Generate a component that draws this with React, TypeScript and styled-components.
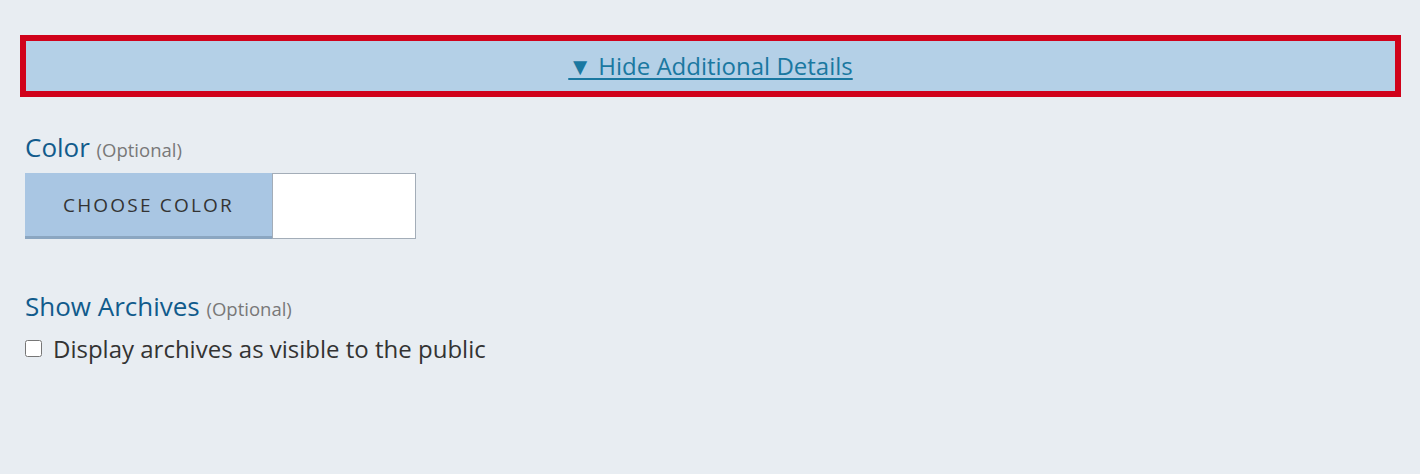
import React from "react";
import styled, { createGlobalStyle } from "styled-components";

const GlobalStyle = createGlobalStyle`
  html, body {
    margin: 0;
    padding: 0;
    background: #e8edf2;
  }
  body {
    font-family: "Open Sans", "Noto Sans", sans-serif;
    color: #333333;
  }
`;

const Page = styled.div`
  width: 1420px;
  height: 474px;
  box-sizing: border-box;
  padding: 35px 19px 0 20px;
  background: #e8edf2;
`;

const Toggle = styled.div`
  height: 62px;
  box-sizing: border-box;
  border: 6px solid #d0021b;
  background: #b4d0e7;
  display: flex;
  align-items: center;
  justify-content: center;
  padding-bottom: 2px;
`;

const ToggleLink = styled.a`
  font-size: 24px;
  color: #1a78a1;
  text-decoration: underline;
  text-underline-offset: 3px;
  text-decoration-thickness: 2px;
  cursor: pointer;
`;

const Field = styled.div<{ $top: number }>`
  padding-left: 5px;
  margin-top: ${({ $top }) => $top}px;
`;

const Label = styled.div`
  font-size: 26px;
  line-height: 30px;
  color: #115b8c;
  margin-bottom: 8px;
`;

const Optional = styled.span`
  font-size: 18.5px;
  color: #787878;
`;

const ColorPicker = styled.div`
  display: flex;
  width: 391px;
`;

const ChooseButton = styled.button`
  width: 247px;
  height: 66px;
  box-sizing: border-box;
  border: none;
  border-bottom: 3px solid #8ba6c1;
  background: #a9c6e3;
  font-family: "Open Sans", "Noto Sans", sans-serif;
  font-size: 19px;
  letter-spacing: 2.2px;
  color: #333333;
  padding: 0;
`;

const Swatch = styled.div`
  flex: 1;
  height: 66px;
  box-sizing: border-box;
  background: #ffffff;
  border: 1px solid #a3adb8;
`;

const CheckRow = styled.label`
  display: flex;
  align-items: center;
  gap: 11px;
  font-size: 24px;
  color: #333333;
  margin-top: 6px;
`;

const Box = styled.input`
  width: 17px;
  height: 17px;
  margin: 0;
`;

export default function App() {
  return (
    <>
      <GlobalStyle />
      <Page>
        <Toggle>
          <ToggleLink>▼ Hide Additional Details</ToggleLink>
        </Toggle>
        <Field $top={35}>
          <Label>
            Color <Optional>(Optional)</Optional>
          </Label>
          <ColorPicker>
            <ChooseButton>CHOOSE COLOR</ChooseButton>
            <Swatch />
          </ColorPicker>
        </Field>
        <Field $top={52}>
          <Label>
            Show Archives <Optional>(Optional)</Optional>
          </Label>
          <CheckRow>
            <Box type="checkbox" />
            Display archives as visible to the public
          </CheckRow>
        </Field>
      </Page>
    </>
  );
}
